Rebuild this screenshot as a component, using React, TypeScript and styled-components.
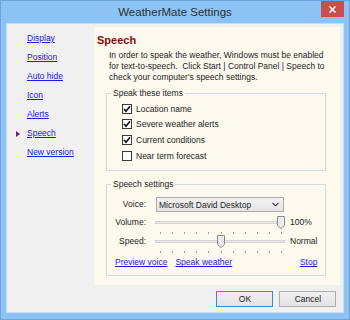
import React from "react";
import styled, { createGlobalStyle, css } from "styled-components";

const GlobalStyle = createGlobalStyle`
  html, body {
    margin: 0;
    padding: 0;
    background: #ffffff;
  }
  body {
    font-family: "Liberation Sans", Arial, sans-serif;
    font-size: 8.5px;
    color: #1e1e1e;
  }
`;

const linkBlue = "#1b1be0";

const Window = styled.div`
  width: 350px;
  height: 320px;
  box-sizing: border-box;
  display: flex;
  flex-direction: column;
  padding: 0 5px 6px 5px;
  background: #8cc3f4;
  border: 1px solid #6aa5dd;
`;

const TitleBar = styled.div`
  display: grid;
  grid-template-columns: 1fr auto 1fr;
  height: 22px;
`;

const Title = styled.div`
  grid-column: 2;
  align-self: center;
  font-size: 11.5px;
  color: #2e2e2e;
  padding-bottom: 1px;
`;

const CloseButton = styled.button`
  grid-column: 3;
  justify-self: end;
  align-self: start;
  width: 23px;
  height: 16px;
  padding: 0;
  border: none;
  background: #c74f50;
  display: flex;
  align-items: center;
  justify-content: center;
`;

const Client = styled.div`
  flex: 1;
  display: flex;
  background: #f0f0f0;
  border: 1px solid #c4def6;
`;

const Nav = styled.nav`
  width: 87px;
  flex-shrink: 0;
  display: flex;
  flex-direction: column;
  padding-top: 5px;
`;

const NavItem = styled.div`
  display: flex;
  align-items: center;
  height: 19px;
`;

const Marker = styled.span<{ $active?: boolean }>`
  width: 20px;
  flex-shrink: 0;
  ${(p) => p.$active && css`
    &::before {
      content: "";
      display: block;
      margin-left: 9px;
      width: 0;
      height: 0;
      border-top: 3.5px solid transparent;
      border-bottom: 3.5px solid transparent;
      border-left: 4.5px solid #7a1a7a;
    }
  `}
`;

const Link = styled.a`
  color: ${linkBlue};
  text-decoration: underline;
  line-height: 11px;
  cursor: pointer;
`;

const Right = styled.div`
  flex: 1;
  display: flex;
  flex-direction: column;
`;

const Panel = styled.section`
  flex: 1;
  margin: 3px 3px 0 0;
  background: #fdf9ef;
  padding: 7px 14px 0 3px;
`;

const Heading = styled.h2`
  margin: 0;
  font-size: 11px;
  line-height: 13px;
  font-weight: bold;
  color: #8b0a0a;
`;

const Intro = styled.p`
  margin: 3px 0 0 12px;
  line-height: 11px;
  white-space: nowrap;
`;

const Group = styled.fieldset`
  margin: 5px 0 0 9px;
  padding: 0;
  border: 1px solid #d6dbdf;
  min-width: 0;
  & + & {
    margin-top: 8px;
  }
`;

const Legend = styled.legend`
  margin-left: 4px;
  padding: 0 2px;
  line-height: 10px;
`;

const CheckList = styled.div`
  display: flex;
  flex-direction: column;
  padding: 3px 0 7px 15px;
`;

const CheckRow = styled.label`
  display: flex;
  align-items: center;
  gap: 4px;
  height: 15.6px;
`;

const Box = styled.span`
  width: 10px;
  height: 10px;
  box-sizing: border-box;
  border: 1px solid #3a3a3a;
  background: #fff;
  display: flex;
  align-items: center;
  justify-content: center;
`;

const Settings = styled.div`
  display: grid;
  grid-template-columns: 39px 130px auto;
  grid-template-rows: 19px 19px 19px auto;
  column-gap: 9px;
  padding: 8px 8px 7px 0;
`;

const RowLabel = styled.span`
  text-align: right;
  align-self: start;
  line-height: 12px;
`;

const VoiceLabel = styled(RowLabel)`
  line-height: 15px;
`;

const Value = styled.span`
  align-self: start;
  line-height: 12px;
  margin-left: -4px;
`;

const Select = styled.div`
  height: 15px;
  box-sizing: border-box;
  margin-left: 1px;
  width: 128px;
  border: 1px solid #acacac;
  background: linear-gradient(#f2f2f2, #e4e4e4);
  display: flex;
  align-items: center;
  justify-content: space-between;
  padding: 0 4px 0 2px;
`;

const SliderBox = styled.div`
  position: relative;
  height: 19px;
`;

const Track = styled.div`
  position: absolute;
  left: 0;
  right: 0;
  top: 5px;
  height: 3px;
  box-sizing: border-box;
  border: 1px solid #d6d6d6;
  background: #e7e7e7;
`;

const Tick = styled.span`
  position: absolute;
  top: 16px;
  width: 1px;
  height: 2px;
  background: #9a9a9a;
`;

const Thumb = styled.svg`
  position: absolute;
  top: 0;
`;

const Links = styled.div`
  grid-column: 1 / -1;
  display: flex;
  gap: 8px;
  padding-left: 8px;
  margin-top: 3px;
  & > :last-child {
    margin-left: auto;
  }
`;

const Footer = styled.div`
  height: 27px;
  display: flex;
  justify-content: flex-end;
  align-items: flex-start;
  gap: 6px;
  padding: 6px 7px 0 0;
  box-sizing: border-box;
`;

const Button = styled.button<{ $default?: boolean }>`
  width: 57px;
  height: 16px;
  padding: 0;
  font-family: inherit;
  font-size: 8.5px;
  color: #1e1e1e;
  background: linear-gradient(#f0f0f0, #e3e3e3);
  border: 1px solid ${(p) => (p.$default ? "#3c8ad0" : "#adadad")};
`;

const TICKS = 11;
const TICK_START = 5;
const TICK_STEP = 12.1;

function Slider({ value }: { value: number }) {
  const x = TICK_START + value * TICK_STEP;
  return (
    <SliderBox>
      <Track />
      {Array.from({ length: TICKS }, (_, i) => (
        <Tick key={i} style={{ left: TICK_START + i * TICK_STEP }} />
      ))}
      <Thumb width="8" height="13" viewBox="0 0 8 13" style={{ left: x - 4 }}>
        <path d="M0.5 0.5 H7.5 V9.5 L4 12.5 L0.5 9.5 Z" fill="#ececec" stroke="#8a8a8a" />
      </Thumb>
    </SliderBox>
  );
}

function Check({ checked, label }: { checked?: boolean; label: string }) {
  return (
    <CheckRow>
      <Box>
        {checked && (
          <svg width="8" height="8" viewBox="0 0 8 8">
            <path d="M1 4 L3 6.2 L7 1.2" fill="none" stroke="#111" strokeWidth="1.6" />
          </svg>
        )}
      </Box>
      {label}
    </CheckRow>
  );
}

const navItems = ["Display", "Position", "Auto hide", "Icon", "Alerts", "Speech", "New version"];

export default function App() {
  return (
    <>
      <GlobalStyle />
      <Window>
        <TitleBar>
          <Title>WeatherMate Settings</Title>
          <CloseButton aria-label="Close">
            <svg width="7" height="7" viewBox="0 0 7 7">
              <path d="M0.5 0.5 L6.5 6.5 M6.5 0.5 L0.5 6.5" stroke="#fff" strokeWidth="1.5" />
            </svg>
          </CloseButton>
        </TitleBar>
        <Client>
          <Nav>
            {navItems.map((n) => (
              <NavItem key={n}>
                <Marker $active={n === "Speech"} />
                <Link>{n}</Link>
              </NavItem>
            ))}
          </Nav>
          <Right>
            <Panel>
              <Heading>Speech</Heading>
              <Intro>
                In order to speak the weather, Windows must be enabled
                <br />
                for text-to-speech.&nbsp; Click Start | Control Panel | Speech to
                <br />
                check your computer's speech settings.
              </Intro>
              <Group>
                <Legend>Speak these items</Legend>
                <CheckList>
                  <Check checked label="Location name" />
                  <Check checked label="Severe weather alerts" />
                  <Check checked label="Current conditions" />
                  <Check label="Near term forecast" />
                </CheckList>
              </Group>
              <Group>
                <Legend>Speech settings</Legend>
                <Settings>
                  <VoiceLabel>Voice:</VoiceLabel>
                  <Select>
                    <span>Microsoft David Desktop</span>
                    <svg width="7" height="5" viewBox="0 0 7 5">
                      <path d="M0.5 0.8 L3.5 3.8 L6.5 0.8" fill="none" stroke="#333" strokeWidth="1.1" />
                    </svg>
                  </Select>
                  <span />
                  <RowLabel>Volume:</RowLabel>
                  <Slider value={10} />
                  <Value>100%</Value>
                  <RowLabel>Speed:</RowLabel>
                  <Slider value={5} />
                  <Value>Normal</Value>
                  <Links>
                    <Link>Preview voice</Link>
                    <Link>Speak weather</Link>
                    <Link>Stop</Link>
                  </Links>
                </Settings>
              </Group>
            </Panel>
            <Footer>
              <Button $default>OK</Button>
              <Button>Cancel</Button>
            </Footer>
          </Right>
        </Client>
      </Window>
    </>
  );
}
